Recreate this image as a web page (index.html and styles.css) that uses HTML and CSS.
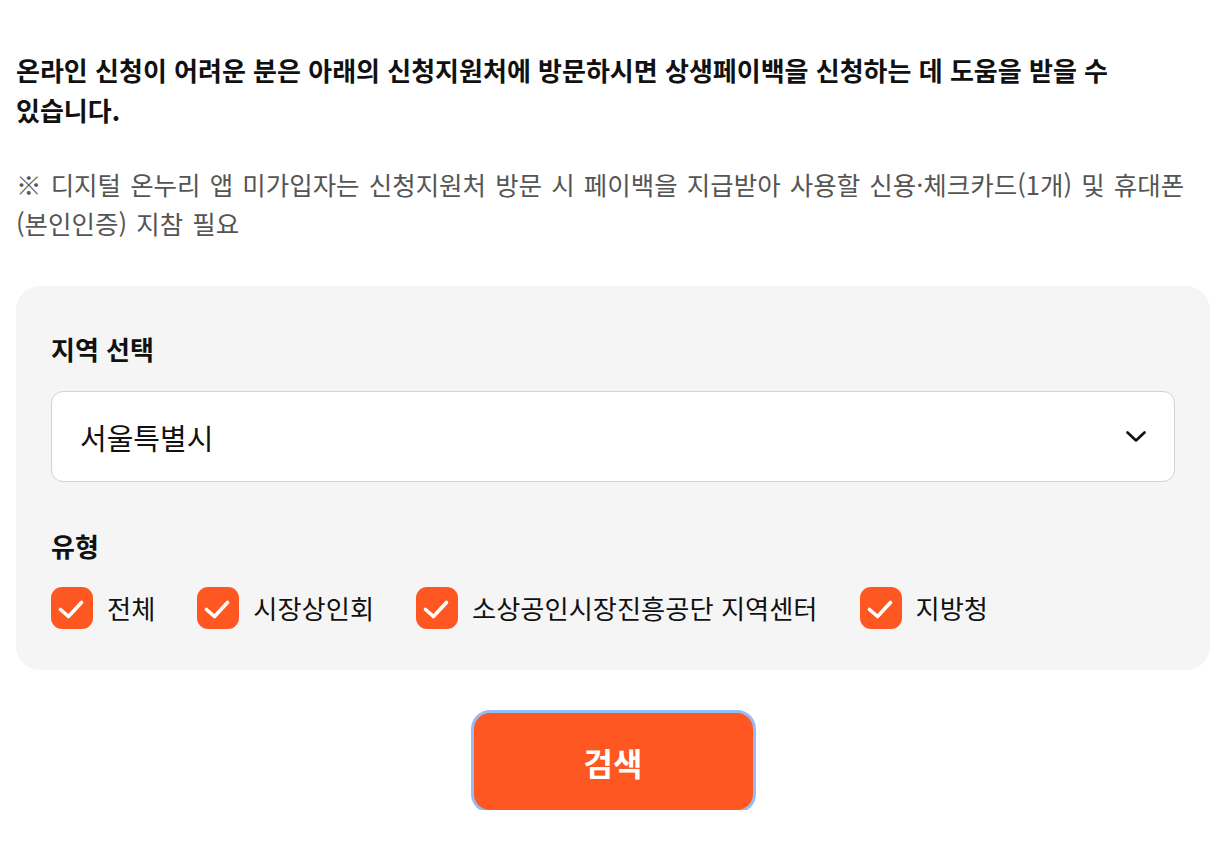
FILE: index.html
```html
<!DOCTYPE html>
<html lang="ko">
<head>
    <meta charset="UTF-8">
    <meta name="viewport" content="width=device-width, initial-scale=1.0">
    <title>상생페이백 신청지원처 찾기</title>
    <link rel="stylesheet" href="styles.css">
</head>
<body>
<div class="wrap">
    <p class="intro">온라인 신청이 어려운 분은 아래의 신청지원처에 방문하시면 상생페이백을 신청하는 데 도움을 받을 수 있습니다.</p>
    <p class="note">※ 디지털 온누리 앱 미가입자는 신청지원처 방문 시 페이백을 지급받아 사용할 신용·체크카드(1개) 및 휴대폰<wbr>(본인인증) 지참 필요</p>

    <div class="search-box">
        <h3 class="field-title">지역 선택</h3>
        <div class="select-wrap">
            <select class="region-select">
                <option>서울특별시</option>
                <option>부산광역시</option>
                <option>대구광역시</option>
                <option>인천광역시</option>
            </select>
            <svg class="chevron" width="20" height="12" viewBox="0 0 20 12">
                <polyline points="1.5,1.5 10,9.5 18.5,1.5" fill="none" stroke="#111" stroke-width="2.6" stroke-linecap="round" stroke-linejoin="round"/>
            </svg>
        </div>

        <h3 class="field-title type-title">유형</h3>
        <div class="check-row">
            <label class="check-item">
                <span class="check-box">
                    <svg width="42" height="42" viewBox="0 0 42 42"><polyline points="9.5,22.5 17.5,29.5 30.5,15.5" fill="none" stroke="#fff" stroke-width="3.6" stroke-linecap="round" stroke-linejoin="round"/></svg>
                </span>
                전체
            </label>
            <label class="check-item">
                <span class="check-box">
                    <svg width="42" height="42" viewBox="0 0 42 42"><polyline points="9.5,22.5 17.5,29.5 30.5,15.5" fill="none" stroke="#fff" stroke-width="3.6" stroke-linecap="round" stroke-linejoin="round"/></svg>
                </span>
                시장상인회
            </label>
            <label class="check-item">
                <span class="check-box">
                    <svg width="42" height="42" viewBox="0 0 42 42"><polyline points="9.5,22.5 17.5,29.5 30.5,15.5" fill="none" stroke="#fff" stroke-width="3.6" stroke-linecap="round" stroke-linejoin="round"/></svg>
                </span>
                소상공인시장진흥공단 지역센터
            </label>
            <label class="check-item">
                <span class="check-box">
                    <svg width="42" height="42" viewBox="0 0 42 42"><polyline points="9.5,22.5 17.5,29.5 30.5,15.5" fill="none" stroke="#fff" stroke-width="3.6" stroke-linecap="round" stroke-linejoin="round"/></svg>
                </span>
                지방청
            </label>
        </div>
    </div>

    <div class="btn-row">
        <button class="search-btn">검색</button>
    </div>
</div>
</body>
</html>
```

FILE: styles.css
```css
body {
    margin: 0;
    font-family: "Noto Sans CJK KR", "Noto Sans", sans-serif;
    color: #111;
    background-color: #fff;
}
.wrap {
    width: 1194px;
    margin-left: 16px;
    padding-top: 50px;
}
.intro {
    margin: 0;
    font-size: 26px;
    font-weight: 700;
    line-height: 40px;
    word-break: keep-all;
}
.note {
    margin: 34px 0 0;
    font-size: 25.5px;
    line-height: 39px;
    word-spacing: 2px;
    color: #555;
    word-break: keep-all;
}
.search-box {
    margin-top: 44px;
    background-color: #f5f5f5;
    border-radius: 24px;
    padding: 45px 35px 41px;
}
.field-title {
    margin: 0;
    font-size: 26px;
    font-weight: 700;
    line-height: 36px;
}
.select-wrap {
    position: relative;
    margin-top: 24px;
}
.region-select {
    display: block;
    width: 100%;
    height: 91px;
    appearance: none;
    -webkit-appearance: none;
    background-color: #fff;
    border: 1px solid #d2d2d8;
    border-radius: 12px;
    padding: 0 60px 0 28px;
    font-family: inherit;
    font-size: 29px;
    color: #111;
    outline: none;
}
.chevron {
    position: absolute;
    right: 29px;
    top: 40px;
    pointer-events: none;
}
.type-title {
    margin-top: 46px;
}
.check-row {
    display: flex;
    gap: 42px;
    margin-top: 23px;
}
.check-item {
    display: flex;
    align-items: center;
    gap: 14px;
    font-size: 26.25px;
    line-height: 42px;
    cursor: pointer;
}
.check-box {
    width: 42px;
    height: 42px;
    border-radius: 11px;
    background-color: #ff5722;
    display: flex;
}
.btn-row {
    display: flex;
    justify-content: center;
    margin-top: 43px;
}
.search-btn {
    width: 279px;
    height: 97px;
    border: none;
    border-radius: 16px;
    background-color: #ff5722;
    color: #fff;
    font-family: inherit;
    font-size: 32px;
    font-weight: 700;
    box-shadow: 0 0 0 3px #93bcf8;
    cursor: pointer;
}
```
